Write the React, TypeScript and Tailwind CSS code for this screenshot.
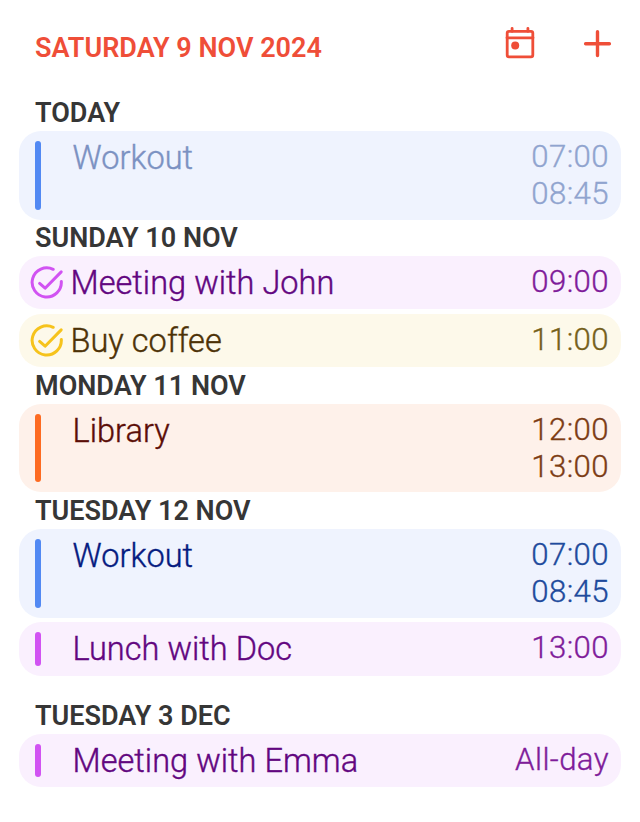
import type { ReactNode } from "react";

type Tone = {
  card: string;
  bar: string;
  title: string;
  time: string;
};

const blue: Tone = { card: "bg-[#eff3fe]", bar: "bg-[#5289f3]", title: "text-[#051a80]", time: "text-[#204a9c]" };
const bluePast: Tone = { card: "bg-[#eff3fe]", bar: "bg-[#5289f3]", title: "text-[#7b91c2]", time: "text-[#90a4cf]" };
const purple: Tone = { card: "bg-[#faf0fe]", bar: "bg-[#d153f2]", title: "text-[#620680]", time: "text-[#7f1c9a]" };
const yellow: Tone = { card: "bg-[#fdf9ea]", bar: "bg-[#f6c31c]", title: "text-[#4d3206]", time: "text-[#75601a]" };
const orange: Tone = { card: "bg-[#fef1ea]", bar: "bg-[#fd6b22]", title: "text-[#5b0d06]", time: "text-[#7c3c14]" };

function CheckCircle({ color }: { color: string }) {
  return (
    <svg width="36" height="36" viewBox="0 0 36 36" fill="none" stroke={color} strokeWidth="3" strokeLinecap="round" strokeLinejoin="round">
      <path d="M24.2 4.3A14.6 14.6 0 1 0 32.3 16.4" />
      <path d="M10.6 18.4l5.5 4.8L32.2 6.9" />
    </svg>
  );
}

function Heading({ children, className }: { children: ReactNode; className: string }) {
  return (
    <h2 className={`flex items-end pl-[35px] text-[27px] leading-[36px] font-semibold whitespace-nowrap text-[#363636] ${className}`}>
      {children}
    </h2>
  );
}

function Event({ tone, title, times, check, className }: { tone: Tone; title: string; times: string[]; check?: string; className: string }) {
  return (
    <div className={`mx-[19px] flex rounded-[22px] pr-[12px] ${tone.card} ${className}`}>
      <div className="flex w-[53.5px] shrink-0">
        {check ? (
          <div className="mt-[9px] ml-[10px]">
            <CheckCircle color={check} />
          </div>
        ) : (
          <div className={`my-[10px] ml-[16px] w-[6px] rounded-[3px] ${tone.bar}`} />
        )}
      </div>
      <div className={`pt-[7px] text-[32.5px] leading-[40px] font-light tracking-[0.04px] whitespace-nowrap [-webkit-text-stroke:0.4px_currentColor] ${check ? "-ml-[2px]" : ""} ${tone.title}`}>{title}</div>
      <div className={`ml-auto pt-[7px] text-right text-[31.2px] leading-[37px] font-light tracking-[0.4px] [-webkit-text-stroke:0.35px_currentColor] ${tone.time}`}>
        {times.map((t) => (
          <div key={t}>{t}</div>
        ))}
      </div>
    </div>
  );
}

export default function App() {
  return (
    <main className="flex h-[822px] w-[640px] flex-col overflow-hidden bg-white font-['Roboto',sans-serif]">
      <header className="flex h-[95px] items-start pr-[28px] pl-[35px] text-[#ef4e38]">
        <h1 className="mt-[30px] text-[27px] leading-[36px] font-semibold whitespace-nowrap">SATURDAY 9 NOV 2024</h1>
        <div className="mt-[24px] ml-auto flex gap-[38px]">
          <svg width="40" height="40" viewBox="500 24 40 40" fill="none" stroke="currentColor" strokeWidth="2.8" strokeLinecap="round" strokeLinejoin="round">
            <rect x="507.2" y="31.3" width="25.6" height="25.6" rx="1.8" />
            <path d="M507 37.8h26M512.1 28.3v3M527.9 28.3v3" />
            <circle cx="515.2" cy="45.6" r="4" fill="currentColor" stroke="none" />
          </svg>
          <svg width="34" height="40" viewBox="578 24 34 40" fill="none" stroke="currentColor" strokeWidth="3.4" strokeLinecap="round">
            <path d="M585.6 43.7h23.8M597.5 31.8v23.8" />
          </svg>
        </div>
      </header>

      <Heading className="h-[36px]">TODAY</Heading>
      <Event className="h-[89px]" tone={bluePast} title="Workout" times={["07:00", "08:45"]} />

      <Heading className="h-[36px]">SUNDAY 10 NOV</Heading>
      <Event className="h-[53px]" tone={purple} title="Meeting with John" times={["09:00"]} check="#d153f2" />
      <Event className="mt-[5px] h-[53px]" tone={yellow} title="Buy coffee" times={["11:00"]} check="#f6c31c" />

      <Heading className="h-[37px]">MONDAY 11 NOV</Heading>
      <Event className="h-[88px]" tone={orange} title="Library" times={["12:00", "13:00"]} />

      <Heading className="h-[37px]">TUESDAY 12 NOV</Heading>
      <Event className="h-[89px]" tone={blue} title="Workout" times={["07:00", "08:45"]} />
      <Event className="mt-[4px] h-[54px]" tone={purple} title="Lunch with Doc" times={["13:00"]} />

      <Heading className="h-[58px]">TUESDAY 3 DEC</Heading>
      <Event className="h-[53px]" tone={purple} title="Meeting with Emma" times={["All-day"]} />
    </main>
  );
}
